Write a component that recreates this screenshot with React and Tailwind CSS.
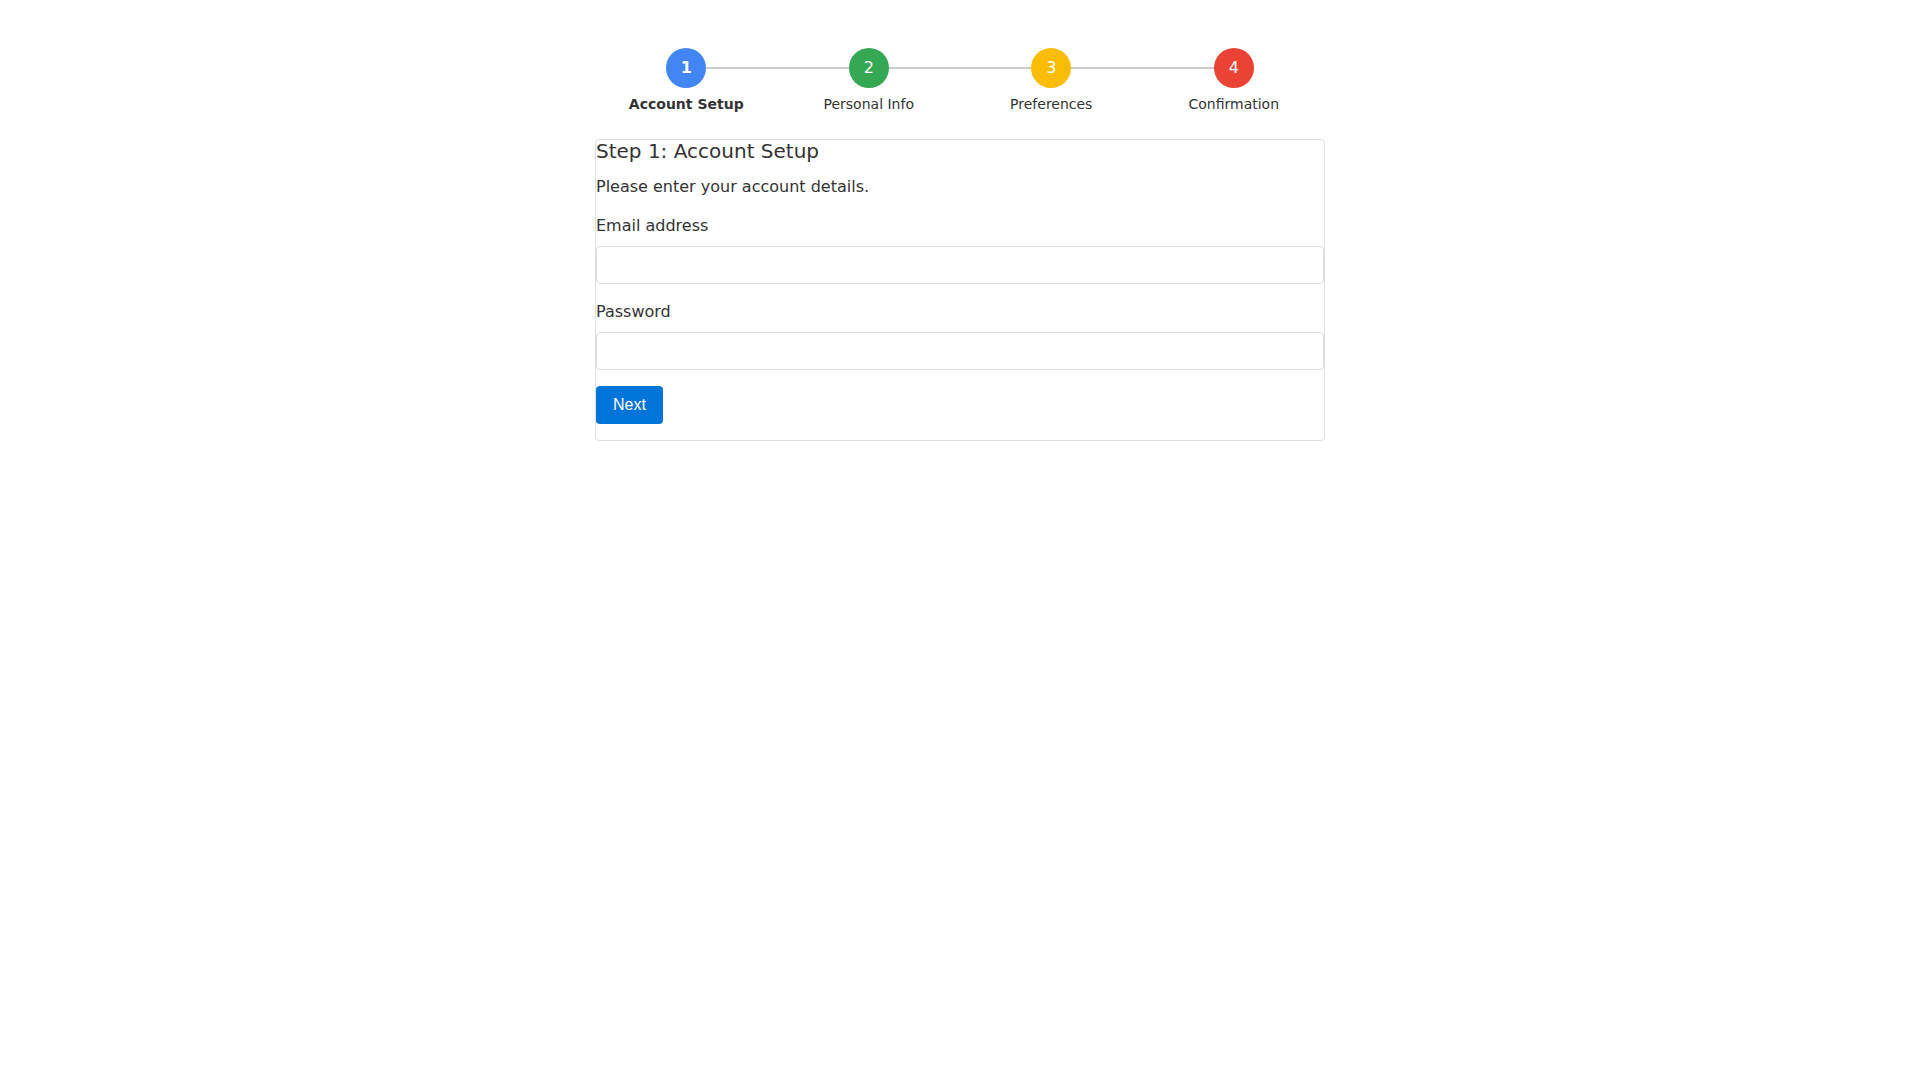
const steps = [
  { n: 1, label: 'Account Setup', color: 'bg-[#4285f4]', active: true },
  { n: 2, label: 'Personal Info', color: 'bg-[#34a853]' },
  { n: 3, label: 'Preferences', color: 'bg-[#fbbc05]' },
  { n: 4, label: 'Confirmation', color: 'bg-[#ea4335]' },
]

function Stepper() {
  return (
    <div className="relative grid w-[730px] grid-cols-4">
      <div className="absolute left-[91px] right-[91px] top-[19px] h-[2px] bg-[#cccccc]" />
      {steps.map((s) => (
        <div key={s.n} className="relative flex flex-col items-center">
          <div
            className={`flex h-10 w-10 items-center justify-center rounded-full text-base text-white ${s.color} ${s.active ? 'font-bold' : ''}`}
          >
            {s.n}
          </div>
          <span className={`mt-[8px] text-sm leading-[16px] text-[#333333] ${s.active ? 'font-bold' : ''}`}>{s.label}</span>
        </div>
      ))}
    </div>
  )
}

export default function App() {
  return (
    <div className="flex min-h-screen flex-col items-center bg-white pt-[48px] font-['DejaVu_Sans',sans-serif] text-[#333333]">
      <Stepper />
      <div className="mt-[27px] flex w-[730px] flex-col rounded-[4px] border border-[#dddddd] pb-4">
        <h3 className="text-[20px] leading-[23px]">Step 1: Account Setup</h3>
        <p className="mt-[14px] text-base leading-[19px]">Please enter your account details.</p>
        <label className="mt-[20px] text-base leading-[19px]">Email address</label>
        <input type="email" className="mt-[11px] h-[38px] rounded-[4px] border border-[#dddddd] px-2 outline-none" />
        <label className="mt-[18px] text-base leading-[19px]">Password</label>
        <input type="password" className="mt-[11px] h-[38px] rounded-[4px] border border-[#dddddd] px-2 outline-none" />
        <div className="mt-4">
          <button className="h-[38px] rounded-[4px] bg-[#0074d9] px-[17px] font-['Liberation_Sans',Arial,sans-serif] text-base text-white">
            Next
          </button>
        </div>
      </div>
    </div>
  )
}
